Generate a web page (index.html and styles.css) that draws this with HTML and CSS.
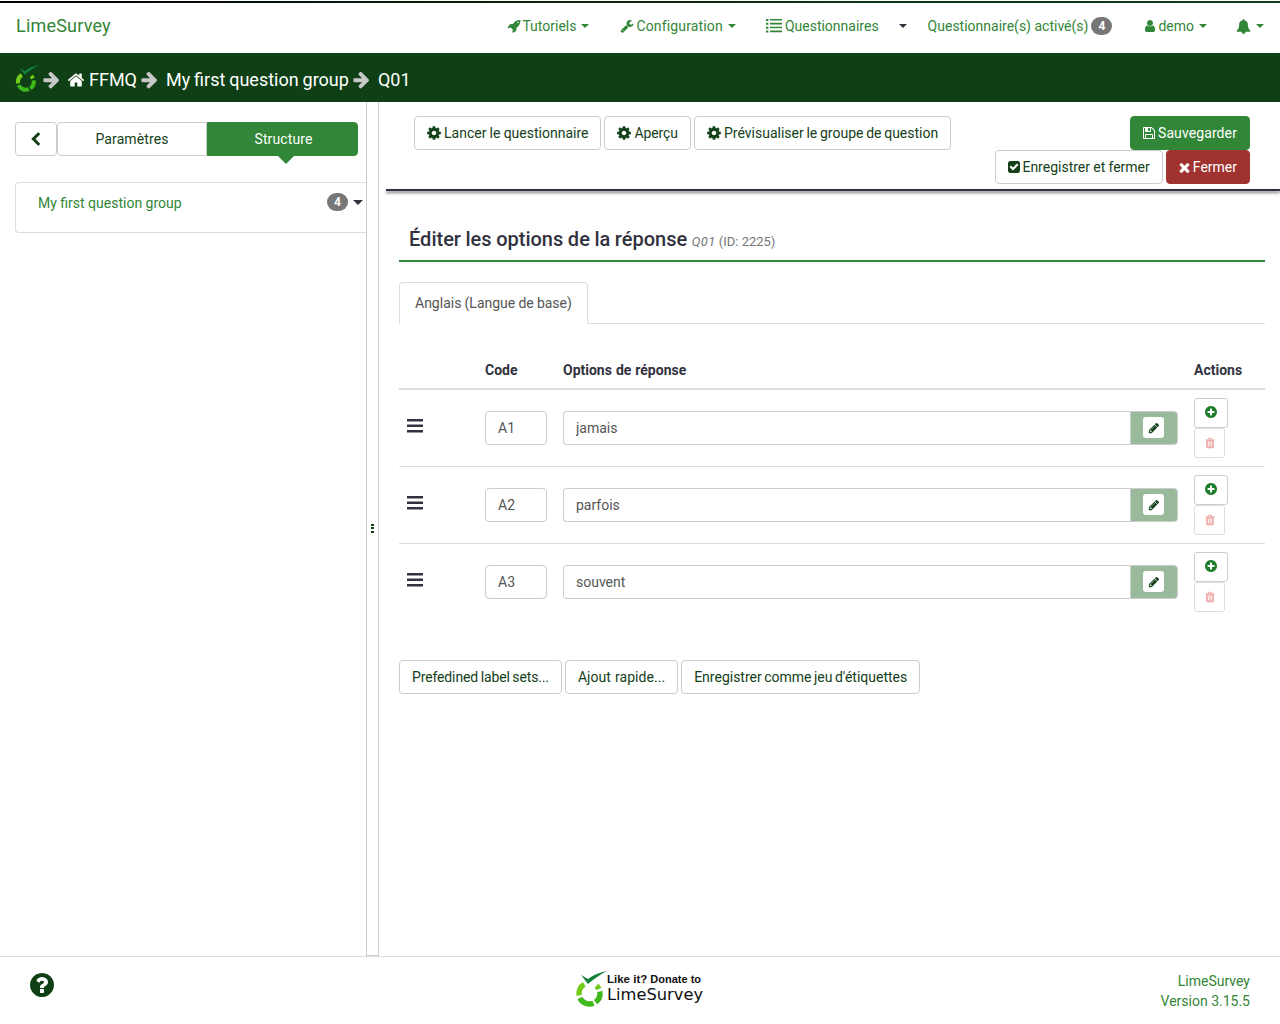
FILE: index.html
```html
<!DOCTYPE html>
<html lang="fr">
<head>
<meta charset="utf-8">
<title>LimeSurvey</title>
<link rel="stylesheet" href="styles.css">
</head>
<body>
<svg class="defs" xmlns="http://www.w3.org/2000/svg">
<symbol id="i-cog" viewBox="0 0 1792 1792"><path d="M1152 896q0-106-75-181t-181-75-181 75-75 181 75 181 181 75 181-75 75-181zm512-109v222q0 12-8 23t-20 13l-185 28q-19 54-39 91 35 50 107 138 10 12 10 25t-9 23q-27 37-99 108t-94 71q-12 0-26-9l-138-108q-44 23-91 38-16 136-29 186-7 28-36 28h-222q-14 0-24.5-8.5t-11.5-21.5l-28-184q-49-16-90-37l-141 107q-10 9-25 9-14 0-25-11-126-114-165-168-7-10-7-23 0-12 8-23 15-21 51-66.5t54-70.5q-27-50-41-99l-183-27q-13-2-21-12.5t-8-23.5v-222q0-12 8-23t19-13l186-28q14-46 39-92-40-57-107-138-10-12-10-24 0-10 9-23 26-36 98.5-107.5t94.5-71.5q13 0 26 10l138 107q44-23 91-38 16-136 29-186 7-28 36-28h222q14 0 24.5 8.5t11.5 21.5l28 184q49 16 90 37l142-107q9-9 24-9 13 0 25 10 129 119 165 170 7 8 7 22 0 12-8 23-15 21-51 66.5t-54 70.5q26 50 41 98l183 28q13 2 21 12.5t8 23.5z"/></symbol>
<symbol id="i-arrow" viewBox="0 0 1792 1792"><path d="M1600 960q0 54-37 91l-651 651q-39 37-91 37-51 0-90-37l-75-75q-38-38-38-91t38-91l293-293h-704q-52 0-84.5-37.5t-32.5-90.5v-128q0-53 32.5-90.5t84.5-37.5h704l-293-294q-38-36-38-90t38-90l75-75q38-38 90-38 53 0 91 38l651 651q37 35 37 90z"/></symbol>
<symbol id="i-home" viewBox="0 0 1792 1792"><path d="M1472 992v480q0 26-19 45t-45 19h-384v-384h-256v384h-384q-26 0-45-19t-19-45v-480q0-1 .5-3t.5-3l575-474 575 474q1 2 1 6zm223-69l-62 74q-8 9-21 11h-3q-13 0-21-7l-692-577-692 577q-12 8-24 7-13-2-21-11l-62-74q-8-10-7-23.5t11-21.5l719-599q32-26 76-26t76 26l244 204v-195q0-14 9-23t23-9h192q14 0 23 9t9 23v408l219 182q10 8 11 21.5t-7 23.5z"/></symbol>
<symbol id="i-rocket" viewBox="0 0 1792 1792"><path d="M1504 448q0-40-28-68t-68-28-68 28-28 68 28 68 68 28 68-28 28-68zm224-288q0 249-75.5 430.5t-253.5 360.5q-81 80-195 176l-20 379q-2 16-16 26l-384 224q-7 4-16 4-12 0-23-9l-64-64q-13-14-8-32l85-276-281-281-276 85q-3 1-9 1-14 0-23-9l-64-64q-17-19-5-39l224-384q10-14 26-16l379-20q96-114 176-195 188-187 358-258t431-71q14 0 24 9.5t10 22.5z"/></symbol>
<symbol id="i-wrench" viewBox="0 0 1792 1792"><path d="M448 1472q0-26-19-45t-45-19-45 19-19 45 19 45 45 19 45-19 19-45zm644-420l-682 682q-37 37-90 37-52 0-91-37l-106-108q-38-36-38-90 0-53 38-91l681-681q39 98 114.5 173.5t173.5 114.5zm634-435q0 39-23 106-47 134-164.5 217.5t-258.5 83.5q-185 0-316.5-131.5t-131.5-316.5 131.5-316.5 316.5-131.5q58 0 121.5 16.5t107.5 46.5q16 11 16 28t-16 28l-293 169v224l193 107q5-3 79-48.5t135.5-81 70.5-35.5q15 0 23.5 10t8.5 25z"/></symbol>
<symbol id="i-list" viewBox="0 0 16 14"><path d="M0 0h2.400v2H0zM4 0h12v1.600H4zM0 3.800h2.400v2H0zM4 3.800h12v1.600H4zM0 7.700h2.400v2H0zM4 7.700h12v1.600H4zM0 11.600h2.400v2H0zM4 11.600h12v1.600H4z"/></symbol>
<symbol id="i-user" viewBox="0 0 1792 1792"><path d="M1536 1399q0 109-62.500 187t-150.500 78h-854q-88 0-150.500-78t-62.500-187q0-85 8.500-160.500t31.500-152 58.500-131 94-89 134.500-34.500q131 128 313 128t313-128q76 0 134.500 34.500t94 89 58.500 131 31.500 152 8.500 160.500zm-256-887q0 159-112.500 271.500t-271.500 112.500-271.500-112.500-112.500-271.500 112.500-271.500 271.500-112.500 271.500 112.500 112.500 271.500z"/></symbol>
<symbol id="i-bell" viewBox="0 0 1792 1792"><path d="M912 1696q0-16-16-16-59 0-101.500-42.500t-42.500-101.500q0-16-16-16t-16 16q0 73 51.500 124.500t124.500 51.500q16 0 16-16zm816-288q0 52-38 90t-90 38h-448q0 106-75 181t-181 75-181-75-75-181h-448q-52 0-90-38t-38-90q50-42 91-88t85-119.500 74.500-158.500 50-206 19.500-260q0-152 117-282.500t307-158.500q-8-19-8-39 0-40 28-68t68-28 68 28 28 68q0 20-8 39 190 28 307 158.500t117 282.500q0 139 19.500 260t50 206 74.500 158.500 85 119.500 91 88z"/></symbol>
<symbol id="i-save" viewBox="0 0 1792 1792"><path d="M512 1536h768v-384h-768v384zm896 0h128v-896q0-14-10-38.500t-20-34.500l-281-281q-10-10-34-20t-39-10v416q0 40-28 68t-68 28h-576q-40 0-68-28t-28-68v-416h-128v1280h128v-416q0-40 28-68t68-28h832q40 0 68 28t28 68v416zm-384-928v-320q0-13-9.500-22.500t-22.500-9.500h-192q-13 0-22.500 9.500t-9.500 22.500v320q0 13 9.500 22.500t22.500 9.500h192q13 0 22.500-9.500t9.500-22.500zm640 32v928q0 40-28 68t-68 28h-1344q-40 0-68-28t-28-68v-1344q0-40 28-68t68-28h928q40 0 88 20t76 48l280 280q28 28 48 76t20 88z"/></symbol>
<symbol id="i-check" viewBox="0 0 1792 1792"><path d="M813 1299l614-614q19-19 19-45t-19-45l-102-102q-19-19-45-19t-45 19l-467 467-211-211q-19-19-45-19t-45 19l-102 102q-19 19-19 45t19 45l358 358q19 19 45 19t45-19zm851-883v960q0 119-84.500 203.500t-203.500 84.500h-960q-119 0-203.500-84.500t-84.500-203.500v-960q0-119 84.500-203.500t203.500-84.500h960q119 0 203.500 84.500t84.500 203.500z"/></symbol>
<symbol id="i-times" viewBox="0 0 1792 1792"><path d="M1490 1322q0 40-28 68l-136 136q-28 28-68 28t-68-28l-294-294-294 294q-28 28-68 28t-68-28l-136-136q-28-28-28-68t28-68l294-294-294-294q-28-28-28-68t28-68l136-136q28-28 68-28t68 28l294 294 294-294q28-28 68-28t68 28l136 136q28 28 28 68t-28 68l-294 294 294 294q28 28 28 68z"/></symbol>
<symbol id="i-pencil" viewBox="0 0 1792 1792"><path d="M491 1536l91-91-235-235-91 91v107h128v128h107zm523-928q0-22-22-22-10 0-17 7l-542 542q-7 7-7 17 0 22 22 22 10 0 17-7l542-542q7-7 7-17zm-54-192l416 416-832 832h-416v-416zm683 96q0 53-37 90l-166 166-416-416 166-165q36-38 90-38 53 0 91 38l235 234q37 39 37 91z"/></symbol>
<symbol id="i-plus" viewBox="0 0 1792 1792"><path d="M1344 960v-128q0-26-19-45t-45-19h-256v-256q0-26-19-45t-45-19h-128q-26 0-45 19t-19 45v256h-256q-26 0-45 19t-19 45v128q0 26 19 45t45 19h256v256q0 26 19 45t45 19h128q26 0 45-19t19-45v-256h256q26 0 45-19t19-45zm320-64q0 209-103 385.500t-279.500 279.500-385.500 103-385.500-103-279.500-279.500-103-385.500 103-385.500 279.500-279.500 385.500-103 385.500 103 279.500 279.500 103 385.500z"/></symbol>
<symbol id="i-trash" viewBox="0 0 1792 1792"><path d="M704 1376v-704q0-14-9-23t-23-9h-64q-14 0-23 9t-9 23v704q0 14 9 23t23 9h64q14 0 23-9t9-23zm256 0v-704q0-14-9-23t-23-9h-64q-14 0-23 9t-9 23v704q0 14 9 23t23 9h64q14 0 23-9t9-23zm256 0v-704q0-14-9-23t-23-9h-64q-14 0-23 9t-9 23v704q0 14 9 23t23 9h64q14 0 23-9t9-23zm-544-992h448l-48-117q-7-9-17-11h-317q-10 2-17 11zm928 32v64q0 14-9 23t-23 9h-96v948q0 83-47 143.500t-113 60.500h-832q-66 0-113-58.500t-47-141.500v-952h-96q-14 0-23-9t-9-23v-64q0-14 9-23t23-9h309l70-167q15-37 54-63t79-26h320q40 0 79 26t54 63l70 167h309q14 0 23 9t9 23z"/></symbol>
<symbol id="i-help" viewBox="0 0 1792 1792"><path d="M1024 1376v-192q0-14-9-23t-23-9h-192q-14 0-23 9t-9 23v192q0 14 9 23t23 9h192q14 0 23-9t9-23zm256-672q0-88-55.500-163t-138.500-116-170-41q-243 0-371 213-15 24 8 42l132 100q7 6 19 6 16 0 25-12 53-68 86-92 34-24 86-24 48 0 85.500 26t37.500 59q0 38-20 61t-68 45q-63 28-115.500 86.500t-52.500 125.500v36q0 14 9 23t23 9h192q14 0 23-9t9-23q0-19 21.500-49.500t54.500-49.500q32-18 49-28.500t46-35 44.500-48 28-60.500 12.500-81zm384 192q0 209-103 385.500t-279.500 279.500-385.500 103-385.500-103-279.500-279.500-103-385.500 103-385.500 279.500-279.500 385.500-103 385.500 103 279.500 279.500 103 385.500z"/></symbol>
<symbol id="i-chevron" viewBox="0 0 1792 1792"><path d="M1427 301l-531 531 531 531q19 19 19 45t-19 45l-166 166q-19 19-45 19t-45-19l-742-742q-19-19-19-45t19-45l742-742q19-19 45-19t45 19l166 166q19 19 19 45t-19 45z"/></symbol>
<symbol id="i-logo" viewBox="0 0 32 36">
  <g fill="none" stroke-width="5.400">
    <path d="M9.250 13.400 A10.500 10.500 0 0 0 4.200 24.500" stroke="#72cc18"/>
    <path d="M4.900 27 A10.500 10.500 0 0 0 18.500 32.200" stroke="#3fb81c"/>
    <path d="M20.500 31.100 A10.500 10.500 0 0 0 24.800 20.500" stroke="#3fb81c"/>
    <path d="M24 18 A10.500 10.500 0 0 0 21.500 14.700" stroke="#6ec81a"/>
  </g>
  <path d="M6 4 L13 8 C18 4 25 1.500 32 0 C25 3.500 19 8 13 13 Z" fill="#14803c"/>
</symbol>
</svg>

<header class="navbar">
  <a class="brand">LimeSurvey</a>
  <nav class="nav">
    <span class="nav-item gap-31"><svg class="ico ico-rocket"><use href="#i-rocket"/></svg>Tutoriels<i class="caret"></i></span>
    <span class="nav-item gap-30"><svg class="ico ico-wrench"><use href="#i-wrench"/></svg><span class="nav-config">Configuration</span><i class="caret"></i></span>
    <span class="nav-item gap-20"><svg class="ico-list"><use href="#i-list"/></svg>Questionnaires</span>
    <span class="nav-item gap-21"><i class="caret caret-solo"></i></span>
    <span class="nav-item gap-33">Questionnaire(s) activé(s)<b class="badge badge-nav">4</b></span>
    <span class="nav-item gap-29"><svg class="ico ico-user"><use href="#i-user"/></svg>demo<i class="caret"></i></span>
    <span class="nav-item"><svg class="ico ico-bell"><use href="#i-bell"/></svg><i class="caret"></i></span>
  </nav>
</header>

<div class="crumbs">
  <svg class="crumb-logo"><use href="#i-logo"/></svg>
  <svg class="crumb-arrow a1"><use href="#i-arrow"/></svg>
  <svg class="crumb-home"><use href="#i-home"/></svg>
  <span>FFMQ</span>
  <svg class="crumb-arrow a2"><use href="#i-arrow"/></svg>
  <span class="c-group">My first question group</span>
  <svg class="crumb-arrow a2"><use href="#i-arrow"/></svg>
  <span class="c-q">Q01</span>
</div>

<div class="workspace">
  <aside class="sidebar">
    <div class="side-tabs">
      <button class="btn side-back"><svg class="chev"><use href="#i-chevron"/></svg></button>
      <button class="btn side-tab">Paramètres</button>
      <button class="btn side-tab active">Structure</button>
    </div>
    <div class="group-panel">
      <span>My first question group</span>
      <span class="group-right"><b class="badge">4</b><i class="caret caret-big"></i></span>
    </div>
  </aside>
  <div class="handle"><span class="dots"></span></div>
  <main class="content">
    <div class="toolbar">
      <div class="tool-left">
        <button class="btn btn-loose"><svg class="ico-btn"><use href="#i-cog"/></svg>Lancer le questionnaire</button>
        <button class="btn btn-preview"><svg class="ico-btn"><use href="#i-cog"/></svg>Aperçu</button>
        <button class="btn"><svg class="ico-btn"><use href="#i-cog"/></svg>Prévisualiser le groupe de question</button>
      </div>
      <div class="tool-right">
        <div class="tool-row"><button class="btn btn-green"><svg class="ico-small ico-save"><use href="#i-save"/></svg>Sauvegarder</button></div>
        <div class="tool-row">
          <button class="btn btn-loose"><svg class="ico-small ico-check"><use href="#i-check"/></svg>Enregistrer et fermer</button>
          <button class="btn btn-red"><svg class="ico-small ico-times"><use href="#i-times"/></svg>Fermer</button>
        </div>
      </div>
    </div>
    <div class="editor">
      <h1 class="title">Éditer les options de la réponse <small><em>Q01</em> (ID: 2225)</small></h1>
      <div class="tabs"><span class="tab">Anglais (Langue de base)</span></div>
      <div class="grid head">
        <span></span><span>Code</span><span class="head-opts">Options de réponse</span><span>Actions</span>
      </div>
      <div class="grid row">
        <svg class="bars" viewBox="0 0 16 14"><path d="M0 0h16v2.500H0zM0 5.500h16V8H0zM0 11h16v2.500H0z"/></svg>
        <input class="field code" value="A1">
        <div class="combo"><input class="field text" value="jamais"><span class="addon"><span class="edit"><svg class="pen"><use href="#i-pencil"/></svg></span></span></div>
        <div class="acts"><button class="act act-add"><svg class="plus"><use href="#i-plus"/></svg></button><button class="act act-del"><svg class="trash"><use href="#i-trash"/></svg></button></div>
      </div>
      <div class="grid row">
        <svg class="bars" viewBox="0 0 16 14"><path d="M0 0h16v2.500H0zM0 5.500h16V8H0zM0 11h16v2.500H0z"/></svg>
        <input class="field code" value="A2">
        <div class="combo"><input class="field text" value="parfois"><span class="addon"><span class="edit"><svg class="pen"><use href="#i-pencil"/></svg></span></span></div>
        <div class="acts"><button class="act act-add"><svg class="plus"><use href="#i-plus"/></svg></button><button class="act act-del"><svg class="trash"><use href="#i-trash"/></svg></button></div>
      </div>
      <div class="grid row last">
        <svg class="bars" viewBox="0 0 16 14"><path d="M0 0h16v2.500H0zM0 5.500h16V8H0zM0 11h16v2.500H0z"/></svg>
        <input class="field code" value="A3">
        <div class="combo"><input class="field text" value="souvent"><span class="addon"><span class="edit"><svg class="pen"><use href="#i-pencil"/></svg></span></span></div>
        <div class="acts"><button class="act act-add"><svg class="plus"><use href="#i-plus"/></svg></button><button class="act act-del"><svg class="trash"><use href="#i-trash"/></svg></button></div>
      </div>
      <div class="bottom-btns">
        <button class="btn btn-tight">Prefedined label sets...</button>
        <button class="btn btn-quick">Ajout rapide...</button>
        <button class="btn btn-labels">Enregistrer comme jeu d'étiquettes</button>
      </div>
    </div>
  </main>
</div>

<footer class="footer">
  <svg class="help"><use href="#i-help"/></svg>
  <div class="donate">
    <svg class="donate-logo"><use href="#i-logo"/></svg>
    <div class="donate-text"><div class="donate-top"><b>Like it?</b> Donate to</div><div class="donate-name">LimeSurvey</div></div>
  </div>
  <div class="version">LimeSurvey<br>Version 3.15.5</div>
</footer>
</body>
</html>
```
FILE: styles.css
```css
* { box-sizing: border-box; }
html, body { margin: 0; padding: 0; height: 100%; }
body {
  display: flex;
  flex-direction: column;
  height: 1024px;
  overflow: hidden;
  font-family: Roboto, "Liberation Sans", sans-serif;
  font-size: 14px;
  line-height: 20px;
  color: #14401a;
  background: #fff;
}
.defs { position: absolute; width: 0; height: 0; }
svg { fill: currentColor; flex: none; }

/* navbar */
.navbar {
  height: 53px;
  flex: none;
  position: relative;
  display: flex;
  align-items: center;
  justify-content: space-between;
  padding: 0 16px 1px 16px;
  color: #328637;
}
.navbar::before {
  content: "";
  position: absolute;
  top: 1px;
  left: 0;
  right: 0;
  height: 2px;
  background: linear-gradient(90deg, #000 0%, #0c2a10 50%, #0f3f14 100%);
}
.brand { font-size: 18px; letter-spacing: .2px; }
.nav { display: flex; align-items: center; }
.nav-item { display: flex; align-items: center; white-space: nowrap; }
.nav-config { letter-spacing: .15px; }
.gap-31 { margin-right: 31px; }
.gap-30 { margin-right: 30px; }
.gap-29 { margin-right: 29px; }
.gap-20 { margin-right: 20px; }
.gap-21 { margin-right: 21px; }
.gap-33 { margin-right: 33px; }
.ico { width: 14px; height: 14px; margin-right: 2px; }
.ico-rocket { margin-right: 1px; }
.ico-wrench { margin-right: 2px; }
.ico-list { width: 16px; height: 14px; margin-right: 3px; }
.ico-user { margin-right: 1px; margin-left: -2px; }
.ico-bell { width: 15px; height: 15px; margin-right: 0; }
.caret {
  display: inline-block;
  width: 0; height: 0;
  margin-left: 5px;
  border-top: 4px solid currentColor;
  border-left: 4px solid transparent;
  border-right: 4px solid transparent;
}
.caret-solo { margin-left: 0; color: #32323f; }
.caret-big { margin-left: 5px; border-top-width: 5px; border-left-width: 5px; border-right-width: 5px; color: #32323f; }
.badge {
  display: inline-block;
  min-width: 21px;
  height: 18px;
  line-height: 18px;
  border-radius: 10px;
  background: #777;
  color: #fff;
  font-size: 12px;
  font-weight: 700;
  text-align: center;
}
.badge-nav { margin-left: 3px; }

/* breadcrumb */
.crumbs {
  height: 49px;
  flex: none;
  background: #0f3f14;
  color: #fff;
  font-size: 18px;
  word-spacing: -.6px;
  display: flex;
  align-items: center;
  padding: 4px 0 0 15px;
}
.crumb-logo { width: 24px; height: 27px; margin-top: -3px; }
.crumb-arrow { width: 19px; height: 19px; color: #c8c8c8; }
.a1 { margin-left: 3px; margin-right: 6px; }
.crumb-home { width: 18px; height: 18px; margin-right: 4px; }
.a2 { margin-left: 3px; margin-right: 7px; }

/* layout */
.workspace { flex: 1; display: flex; min-height: 0; }
.sidebar { width: 366px; flex: none; padding: 20px 0 0 15px; }
.handle {
  width: 13px;
  flex: none;
  border-left: 1px solid #ccc;
  border-right: 1px solid #ccc;
  border-bottom: 1px solid #ccc;
  display: flex;
  align-items: center;
  justify-content: center;
}
.dots {
  width: 3px;
  height: 9px;
  background: repeating-linear-gradient(#0f3f14 0 2px, #fff 2px 3.500px);
}
.content { flex: 1; min-width: 0; }

/* buttons */
.btn {
  height: 34px;
  padding: 0 12px;
  border: 1px solid #ccc;
  border-radius: 4px;
  background: #fff;
  color: #14401a;
  font: 14px/20px Roboto, "Liberation Sans", sans-serif;
  word-spacing: -.75px;
  display: inline-flex;
  align-items: center;
  white-space: nowrap;
}
.btn-loose { word-spacing: -.25px; }
.btn-preview { letter-spacing: -.1px; }
.btn-quick { word-spacing: .5px; letter-spacing: .05px; }
.btn-tight { letter-spacing: -.13px; }
.btn-labels { word-spacing: -1px; }
.btn-green { background: #328637; border-color: #328637; color: #fff; letter-spacing: .1px; }
.btn-red { background: #a03330; border-color: #a03330; color: #fff; }
.ico-btn { width: 16px; height: 16px; margin: 0 2px 0 -1px; }
.ico-small { width: 14px; height: 14px; }
.ico-save { margin: 0 2px 0 -1px; }
.ico-check { margin: 0 1px 0 -1px; }
.ico-times { width: 15px; height: 15px; margin: 0 1px 0 -2px; }

/* sidebar */
.side-tabs { display: flex; width: 343px; }
.side-back { width: 42px; justify-content: center; padding: 0 1px 0 0; }
.chev { width: 15px; height: 15px; }
.side-tab { width: 150px; justify-content: center; border-radius: 4px 0 0 4px; letter-spacing: .1px; }
.side-tab.active {
  width: 151px;
  padding-left: 14px;
  background: #328637;
  border-color: #328637;
  color: #fff;
  border-radius: 0 4px 4px 0;
  position: relative;
}
.side-tab.active::after {
  content: "";
  position: absolute;
  top: 33px;
  left: 70px;
  border-top: 8px solid #328637;
  border-left: 8px solid transparent;
  border-right: 8px solid transparent;
}
.group-panel {
  margin-top: 26px;
  height: 51px;
  border: 1px solid #ddd;
  border-right: 0;
  border-radius: 4px 0 0 4px;
  padding: 10px 3px 0 22px;
  display: flex;
  justify-content: space-between;
  color: #328637;
}
.group-right { display: flex; align-items: center; height: 18px; }

/* toolbar */
.toolbar {
  height: 89px;
  margin-left: 7px;
  padding: 14px 30px 0 28px;
  display: flex;
  justify-content: space-between;
  position: relative;
}
.toolbar::after {
  content: "";
  position: absolute;
  left: 0;
  right: 0;
  bottom: 0;
  height: 2px;
  background: #32323f;
  box-shadow: 0 2px 3px rgba(50, 50, 63, .7);
}
.tool-left { display: flex; gap: 3px; align-items: flex-start; }
.tool-right { display: flex; flex-direction: column; align-items: flex-end; }
.tool-row { display: flex; gap: 3px; }

/* editor */
.editor { padding: 0 15px 0 20px; color: #32323f; }
.title {
  margin: 36px 0 0;
  padding: 0 0 9px 10px;
  height: 35px;
  border-bottom: 2px solid #328637;
  font-size: 20px;
  line-height: 24px;
  font-weight: 500;
  word-spacing: -.4px;
  color: #32323f;
  white-space: nowrap;
}
.title small { font-size: 13px; font-weight: 400; color: #777; word-spacing: 0; }
.title em { letter-spacing: .3px; }
.tabs {
  margin-top: 20px;
  height: 42px;
  border-bottom: 1px solid #ddd;
  display: flex;
}
.tab {
  height: 42px;
  padding: 10px 15px;
  border: 1px solid #ddd;
  border-bottom-color: #fff;
  border-radius: 4px 4px 0 0;
  word-spacing: -.3px;
  color: #555;
}
.grid {
  display: grid;
  grid-template-columns: 86px 78px 631px 1fr;
  align-items: center;
}
.head {
  margin-top: 27px;
  height: 39px;
  border-bottom: 2px solid #ddd;
  font-weight: 700;
}
.head-opts { word-spacing: .5px; }
.row { height: 77px; border-bottom: 1px solid #ddd; }
.row.last { border-bottom-color: transparent; }
.bars { width: 16px; height: 14px; margin: 0 0 5px 8px; color: #32323f; }
.field {
  height: 34px;
  border: 1px solid #ccc;
  border-radius: 4px;
  padding: 0 12px;
  font: 14px/20px Roboto, "Liberation Sans", sans-serif;
  color: #555;
  background: #fff;
  outline: 0;
}
.code { width: 62px; }
.combo { display: flex; width: 615px; }
.text { flex: 1; min-width: 0; border-radius: 4px 0 0 4px; border-right: 0; }
.addon {
  width: 48px;
  height: 34px;
  padding: 0 1px 1px 0;
  background: #99bb9b;
  border: 1px solid #ccc;
  border-radius: 0 4px 4px 0;
  display: flex;
  align-items: center;
  justify-content: center;
}
.edit {
  width: 21px;
  height: 21px;
  background: #fff;
  border-radius: 3px;
  color: #14401a;
  display: flex;
  align-items: center;
  justify-content: center;
}
.pen { width: 12px; height: 12px; }
.acts { display: flex; flex-direction: column; align-items: flex-start; }
.act {
  height: 30px;
  padding: 0;
  background: #fff;
  border: 1px solid #ccc;
  border-radius: 3px;
  display: flex;
  align-items: center;
  justify-content: center;
}
.act-add { width: 34px; color: #1e7d28; }
.act-del { width: 31px; color: #efa9a9; border-color: #ddd; }
.plus { width: 14px; height: 14px; margin-bottom: 2px; }
.trash { width: 12px; height: 12px; }
.bottom-btns { display: flex; gap: 3px; margin-top: 39px; }

/* footer */
.footer {
  height: 68px;
  flex: none;
  border-top: 1px solid #ddd;
  display: flex;
  align-items: flex-start;
  justify-content: space-between;
  padding: 14px 30px 0 28px;
  position: relative;
}
.help { width: 28px; height: 28px; color: #0f3f14; }
.donate {
  position: absolute;
  left: 575px;
  top: 14px;
  display: flex;
  align-items: flex-start;
  color: #111;
  font-family: "Liberation Sans", sans-serif;
}
.donate-logo { width: 32px; height: 36px; }
.donate-text { margin-top: 2px; }
.donate-top { font-size: 11px; line-height: 12px; font-weight: 700; white-space: nowrap; }
.donate-top b { font-size: 11.500px; }
.donate-name { line-height: 19px; white-space: nowrap; font-family: "DejaVu Sans", sans-serif; font-size: 16.300px; }
.version { text-align: right; color: #328637; }
```
